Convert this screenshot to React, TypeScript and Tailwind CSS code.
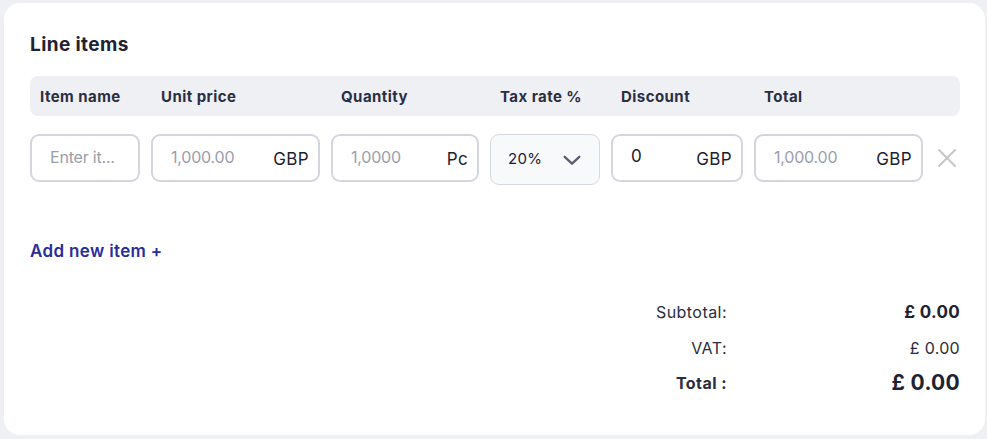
import { FC } from "react";

const font = { fontFamily: "Inter, 'Noto Sans', sans-serif" };

interface FieldProps {
  width: string;
  value: string;
  placeholder?: boolean;
  unit?: string;
}

const Field: FC<FieldProps> = ({ width, value, placeholder, unit }) => {
  return (
    <div
      className={`${width} h-[48px] shrink-0 flex items-center justify-between rounded-[9px] border-2 border-[#d3d6de] bg-white pl-[18px] pr-[9px]`}
    >
      <span
        className={
          placeholder
            ? "text-[16px] text-[#9a9eab] tracking-[-0.2px] -mt-[3px]"
            : "text-[17px] text-[#1d2030] -mt-[3px]"
        }
      >
        {value}
      </span>
      {unit && <span className="text-[17px] tracking-[0.4px] text-[#1d2030] mt-[3px]">{unit}</span>}
    </div>
  );
};

const headers = [
  { label: "Item name", w: "w-[121px]" },
  { label: "Unit price", w: "w-[180px]" },
  { label: "Quantity", w: "w-[159px]" },
  { label: "Tax rate %", w: "w-[121px]" },
  { label: "Discount", w: "w-[143px]" },
  { label: "Total", w: "w-[180px]" },
];

export default function App() {
  return (
    <div className="min-h-screen bg-[#eff0f4] pt-[3px] pl-[4px] pr-[2px]" style={font}>
      <div className="h-[432px] w-[981px] rounded-[16px] bg-white pl-[26px] pr-[25px] pt-[28px]">
        <h2 className="text-[19px] leading-[28px] font-bold tracking-[0.4px] text-[#1f2231]">Line items</h2>

        {/* table header */}
        <div className="mt-[17px] h-[40px] flex items-center rounded-[8px] bg-[#eff0f4] pl-[10px] pt-[3px]">
          {headers.map((h) => (
            <div key={h.label} className={`${h.w} shrink-0 text-[15px] font-bold tracking-[0.45px] text-[#2a2f42]`}>
              {h.label}
            </div>
          ))}
        </div>

        {/* line row */}
        <div className="mt-[18px] flex items-start gap-[11px]">
          <Field width="w-[110px]" value="Enter it..." placeholder />
          <Field width="w-[169px]" value="1,000.00" placeholder unit="GBP" />
          <Field width="w-[148px]" value="1,0000" placeholder unit="Pc" />
          <div className="w-[110px] h-[51px] shrink-0 flex items-center justify-between rounded-[9px] border border-[#d6d8df] bg-[#f8f9fb] pl-[17px] pr-[16px]">
            <span className="text-[15px] tracking-[0.3px] text-[#1d2030]">20%</span>
            <svg width="22" height="22" viewBox="0 0 24 24" fill="none" stroke="#5d6073" strokeWidth="2.6" strokeLinecap="round" strokeLinejoin="round">
              <polyline points="4 8.5 12 16 20 8.5" />
            </svg>
          </div>
          <Field width="w-[132px]" value="0" unit="GBP" />
          <Field width="w-[169px]" value="1,000.00" placeholder unit="GBP" />
          <div className="h-[48px] flex items-center pl-[2px]">
            <svg width="22" height="22" viewBox="0 0 22 22" fill="none" stroke="#c4c5ca" strokeWidth="2" strokeLinecap="round">
              <line x1="3" y1="3" x2="19" y2="19" />
              <line x1="19" y1="3" x2="3" y2="19" />
            </svg>
          </div>
        </div>

        <button className="mt-[54px] text-[17px] leading-[24px] font-semibold tracking-[0.35px] text-[#2a2c98]">
          Add new item +
        </button>

        {/* totals */}
        <div className="mt-[37px] flex flex-col items-end gap-[12px]">
          <div className="flex items-center">
            <span className="text-[16px] leading-[24px] tracking-[0.45px] text-[#2a2d3d] text-right">Subtotal:</span>
            <span className="w-[233px] text-right text-[17px] leading-[24px] font-bold tracking-[0.3px] text-[#1f2231]">£ 0.00</span>
          </div>
          <div className="flex items-center">
            <span className="text-[16px] leading-[24px] tracking-[0.45px] text-[#2a2d3d] text-right">VAT:</span>
            <span className="w-[233px] text-right text-[16px] leading-[24px] tracking-[0.3px] text-[#2a2d3d]">£ 0.00</span>
          </div>
          <div className="flex items-center -mt-[1px]">
            <span className="text-[16px] leading-[24px] font-bold tracking-[0.45px] text-[#2a2d3d] text-right">Total :</span>
            <span className="w-[233px] text-right text-[21px] leading-[24px] font-bold tracking-[0.3px] text-[#1f2231]">£ 0.00</span>
          </div>
        </div>
      </div>
    </div>
  );
}
